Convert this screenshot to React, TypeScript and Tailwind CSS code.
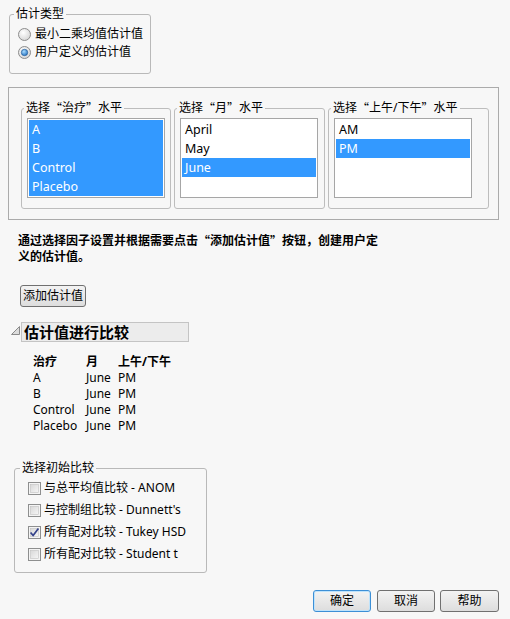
import React from 'react';

const font = "font-['Noto_Sans','Noto_Sans_CJK_SC',sans-serif]";

// full-width CJK quotes, as the dialog's font draws them
function Q({ c }: { c: string }) {
  return <span className="font-['Noto_Sans_CJK_SC',sans-serif] align-top">{c}</span>;
}

function Radio({ checked }: { checked?: boolean }) {
  return (
    <svg width="13" height="13" viewBox="0 0 13 13" className="shrink-0">
      <defs>
        <radialGradient id="rbg" cx="40%" cy="35%" r="70%">
          <stop offset="0%" stopColor="#ffffff" />
          <stop offset="100%" stopColor="#d4d4d4" />
        </radialGradient>
        <radialGradient id="rdot" cx="40%" cy="35%" r="70%">
          <stop offset="0%" stopColor="#a9dcff" />
          <stop offset="100%" stopColor="#1f6fc0" />
        </radialGradient>
      </defs>
      <circle cx="6.5" cy="6.5" r="6" fill="url(#rbg)" stroke="#8d8d8d" />
      {checked && <circle cx="6.5" cy="6.5" r="3.2" fill="url(#rdot)" stroke="#2a5f9a" strokeWidth="0.7" />}
    </svg>
  );
}

function Check({ checked }: { checked?: boolean }) {
  return (
    <svg width="13" height="13" viewBox="0 0 13 13" className="shrink-0">
      <defs>
        <linearGradient id="cbg" x1="0" y1="0" x2="1" y2="1">
          <stop offset="0%" stopColor="#d8d8d8" />
          <stop offset="100%" stopColor="#f6f6f6" />
        </linearGradient>
      </defs>
      <rect x="0.5" y="0.5" width="12" height="12" fill="#f4f4f4" stroke="#8e8f8f" />
      <rect x="2.5" y="2.5" width="8" height="8" fill="url(#cbg)" stroke="#c2c2c2" strokeWidth="0.6" />
      {checked && (
        <path d="M2.6 6.4 L5.1 9.6 L10.4 2.6" stroke="#34428a" strokeWidth="1.7" fill="none" strokeLinejoin="round" />
      )}
    </svg>
  );
}

function ListBox({ items, selected }: { items: string[]; selected: string[] }) {
  return (
    <div className="w-[138px] h-[80px] border border-[#a6a6a6] bg-white p-px">
      {items.map((it) => (
        <div
          key={it}
          className={
            'h-[19px] leading-[20px] pl-[3px] text-[12.5px] ' +
            (selected.includes(it) ? 'bg-[#3399ff] text-white' : 'text-black')
          }
        >
          {it}
        </div>
      ))}
    </div>
  );
}

function Level({ title, width, items, selected }: { title: string; width: string; items: string[]; selected: string[] }) {
  return (
    <fieldset className={'border border-[#bdbdbd] rounded-[3px] pl-[5px] pt-[2px] pb-[10px] ' + width}>
      <legend className="ml-[-3px] px-[2px] h-[16px] leading-[16px]">
        选择<Q c="“" />{title}<Q c="”" />水平
      </legend>
      <ListBox items={items} selected={selected} />
    </fieldset>
  );
}

function Btn({ children, primary, className = '' }: { children: React.ReactNode; primary?: boolean; className?: string }) {
  return (
    <button
      className={
        'h-[22px] rounded-[3px] border bg-gradient-to-b from-[#f3f3f3] to-[#dddddd] text-[12px] leading-[20px] text-black ' +
        (primary ? 'border-[#3c8fd6] shadow-[inset_0_0_0_1px_#bfe3fb] ' : 'border-[#707070] ') +
        className
      }
    >
      {children}
    </button>
  );
}

export default function App() {
  const options = [
    { label: '与总平均值比较 - ANOM', checked: false },
    { label: "与控制组比较 - Dunnett's", checked: false },
    { label: '所有配对比较 - Tukey HSD', checked: true },
    { label: '所有配对比较 - Student t', checked: false },
  ];
  const rows = ['A', 'B', 'Control', 'Placebo'];

  return (
    <div className={'w-[510px] h-[619px] bg-[#f7f7f7] pt-[6px] text-[12px] text-black overflow-hidden ' + font}>
      {/* 估计类型 */}
      <fieldset className="ml-[9px] w-[142px] border border-[#b9b9b9] rounded-[3px] pl-[4px] pt-[3px] pb-[12px]">
        <legend className="px-[2px] leading-[16px]">估计类型</legend>
        <div className="flex items-center gap-[4px] h-[18px] ml-[4px]">
          <Radio />
          <span>最小二乘均值估计值</span>
        </div>
        <div className="flex items-center gap-[4px] h-[18px] ml-[4px]">
          <Radio checked />
          <span>用户定义的估计值</span>
        </div>
      </fieldset>

      {/* level panel */}
      <div className="ml-[8px] mt-[13px] w-[491px] border border-[#ababab] pl-[12px] pt-[12px] pb-[10px] flex gap-[3px]">
        <Level title="治疗" width="w-[150px]" items={['A', 'B', 'Control', 'Placebo']} selected={['A', 'B', 'Control', 'Placebo']} />
        <Level title="月" width="w-[151px]" items={['April', 'May', 'June']} selected={['June']} />
        <Level title="上午/下午" width="w-[161px]" items={['AM', 'PM']} selected={['PM']} />
      </div>

      <p className="ml-[18px] mt-[13px] font-bold leading-[16px]">
        <span className="block h-[16px]">
          通过选择因子设置并根据需要点击<Q c="“" />添加估计值<Q c="”" />按钮，创建用户定
        </span>
        <span className="block h-[16px]">义的估计值。</span>
      </p>

      <div className="ml-[20px] mt-[20px]">
        <Btn className="w-[66px]">添加估计值</Btn>
      </div>

      {/* 估计值进行比较 */}
      <div className="mt-[15px] ml-[11px] flex items-end">
        <svg width="9" height="9" viewBox="0 0 9 9" className="mb-[7px] mr-[1px]">
          <path d="M8.5 0.5 L8.5 8.5 L0.5 8.5 Z" fill="#dcdcdc" stroke="#8a8a8a" strokeWidth="1" strokeLinejoin="round" />
        </svg>
        <div className="w-[168px] h-[20px] border border-[#c4c4c4] bg-[#ececec] pl-[2px] text-[15px] font-bold leading-[18px]">
          估计值进行比较
        </div>
      </div>

      <div className="ml-[33px] mt-[12px] grid grid-cols-[53px_32px_auto] w-max leading-[16px]">
        <div className="font-bold">治疗</div>
        <div className="font-bold">月</div>
        <div className="font-bold">上午/下午</div>
        {rows.map((r) => (
          <React.Fragment key={r}>
            <div>{r}</div>
            <div>June</div>
            <div>PM</div>
          </React.Fragment>
        ))}
      </div>

      {/* 选择初始比较 */}
      <fieldset className="ml-[14px] mt-[26px] w-[193px] border border-[#b9b9b9] rounded-[3px] pl-[5px] pt-px pb-[7px]">
        <legend className="px-[2px] leading-[16px]">选择初始比较</legend>
        {options.map((o) => (
          <div key={o.label} className="flex items-center gap-[3px] h-[22px] ml-[8px]">
            <Check checked={o.checked} />
            <span>{o.label}</span>
          </div>
        ))}
      </fieldset>

      <div className="mt-[17px] pr-[11px] flex justify-end">
        <Btn primary className="w-[58px] mr-[6px]">确定</Btn>
        <Btn className="w-[58px] mr-[5px]">取消</Btn>
        <Btn className="w-[59px]">帮助</Btn>
      </div>
    </div>
  );
}
